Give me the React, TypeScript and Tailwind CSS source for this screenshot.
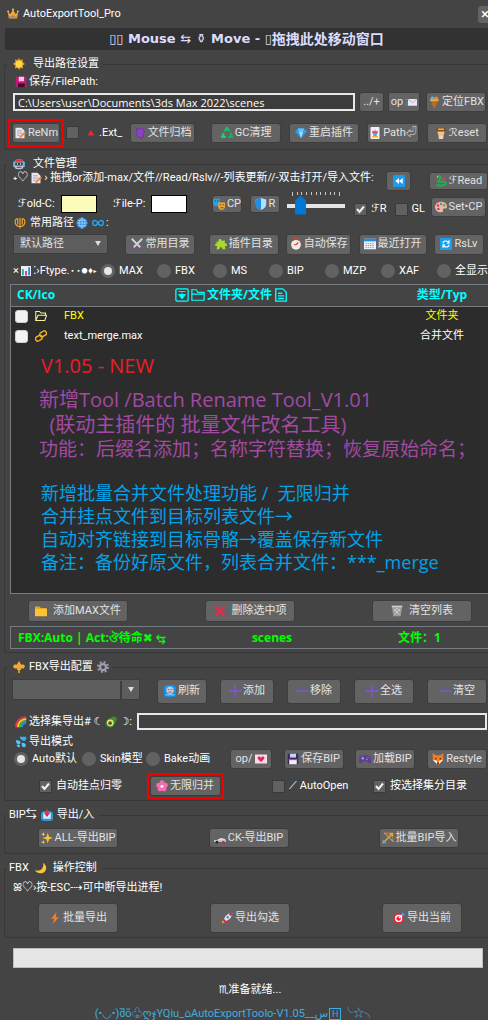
import { useState } from 'react'
import type { ReactNode } from 'react'
import clsx from 'clsx'

const drawings: Record<string, ReactNode> = {
  crown: (
    <>
      <path d="M1 5l3.500 3L8 2l3.500 6L15 5l-1.500 9h-11z" fill="#f2a33a" />
      <path d="M2.500 11h11v2.500h-11z" fill="#d9822b" />
      <circle cx="8" cy="11" r="1.500" fill="#3aa0e8" />
      <circle cx="8" cy="2" r="1.300" fill="#ffd36b" />
      <circle cx="1.500" cy="4.500" r="1.200" fill="#ffd36b" />
      <circle cx="14.500" cy="4.500" r="1.200" fill="#ffd36b" />
    </>
  ),
  sun: (
    <>
      <path d="M8 0l1.800 3L13 1.800l-.2 3.400L16 8l-3.200 2 .7 4-3.700-1L8 16l-1.800-3-3.700 1 .7-4L0 8l3.200-2.800L3 1.800 6.200 3z" fill="#e8a21e" />
      <circle cx="8" cy="8" r="4.500" fill="#ffd84a" />
    </>
  ),
  pinkDisk: (
    <>
      <path d="M1 1h14v14H3l-2-2z" fill="#d0127c" />
      <path d="M5 1h7v6H5z" fill="#f7c9e4" />
      <path d="M4 10h9v5H4z" fill="#3d0b2b" />
    </>
  ),
  memo: (
    <>
      <path d="M2 1h8l4 4v10H2z" fill="#e9e4ee" />
      <path d="M4 5h6M4 8h7M4 11h4" stroke="#8c93a8" />
      <path d="M14.500 5.500L8 12l-1.500 3 3-1L16 7.500z" fill="#f28a2a" />
    </>
  ),
  redTriangle: <path d="M8 2l6.500 11h-13z" fill="#f0262f" />,
  archive: (
    <path d="M3 2l4 1 2-2 3 2 2 4-2 2 1 4-4 2-3-2-3-3 1-3z" fill="#8e3fc4" stroke="#6d2aa0" />
  ),
  recycle: (
    <>
      <path d="M5 5.500L8 1l3 4.500" stroke="#16c46a" strokeWidth="3" fill="none" />
      <path d="M12.500 7.500L14.500 13H9.500" stroke="#10b45d" strokeWidth="3" fill="none" />
      <path d="M6.500 13h-5l2.200-5" stroke="#18d272" strokeWidth="3" fill="none" />
    </>
  ),
  gem: (
    <>
      <path d="M4 2h8l4 4-8 9L0 6z" fill="#2a9df0" />
      <path d="M5 6h6l-3 9z" fill="#9be2ff" />
      <path d="M4 2h8l-1 4H5z" fill="#5cc4ff" />
    </>
  ),
  joker: (
    <>
      <rect x="2" y="0" width="12" height="16" rx="1" fill="#f2eef5" />
      <path d="M4 5l3 1 1-3 1 3 3-1-1 4H5z" fill="#e2368c" />
      <circle cx="8" cy="10" r="2.500" fill="#35b7d8" />
      <path d="M4 13h8" stroke="#f3b52f" strokeWidth="2" />
    </>
  ),
  reset: (
    <>
      <path d="M2 1h12v6H2z" fill="#7a4b1f" />
      <path d="M4 2h8v2H4z" fill="#f0b63c" />
      <path d="M3 6h10l-2 7H5z" fill="#f4c08b" />
      <path d="M5 12h6v4H5z" fill="#ead7bb" />
    </>
  ),
  mail: (
    <>
      <path d="M0 5h4M1 9h3M0 12h4" stroke="#29a3e8" strokeWidth="1.500" />
      <rect x="4" y="4" width="12" height="9" fill="#ece6f5" />
      <path d="M4 4l6 5 6-5" stroke="#a79bbf" fill="none" />
    </>
  ),
  torch: (
    <>
      <path d="M4 7h9l-3.500 9h-2z" fill="#b96b28" />
      <path d="M3 4h11v3H3z" fill="#f3b23a" />
      <circle cx="6" cy="3" r="2.500" fill="#49c0e0" />
      <circle cx="11" cy="3" r="2.500" fill="#f08a2c" />
    </>
  ),
  robot: (
    <>
      <path d="M0 5h3v7H0zM13 5h3v7h-3z" fill="#4aa8e8" />
      <rect x="2" y="2" width="12" height="13" rx="4" fill="#b9c3d2" />
      <path d="M3 2h10v3H3z" fill="#e0313d" />
      <rect x="3" y="6" width="10" height="4" fill="#2a2e3a" />
      <circle cx="6" cy="8" r="1" fill="#fff" />
      <circle cx="10" cy="8" r="1" fill="#fff" />
      <path d="M5 12.500h6" stroke="#333" />
    </>
  ),
  rewind: (
    <>
      <rect width="16" height="16" rx="1" fill="#1a9cf0" />
      <path d="M8 4v8L3 8zM13 4v8L8 8z" fill="#fff" />
    </>
  ),
  dragon: (
    <>
      <path d="M3 2c4-2 6 2 3 4s-2 4 3 3 6 1 5 3-8 3-12 1" stroke="#1fae54" strokeWidth="2.800" fill="none" />
      <path d="M9 5l5-3-1 5z" fill="#e03a6c" />
      <circle cx="3.500" cy="2.500" r="1" fill="#ffe24a" />
    </>
  ),
  masks: (
    <>
      <path d="M0 1h9v6c0 3-2 4-4.500 4S0 10 0 7z" fill="#20a4ec" />
      <path d="M7 6h9v5c0 3-2 5-4.500 5S7 14 7 11z" fill="#f4a52c" />
      <path d="M2 4h2M5.500 4h2M9 9h2M12.500 9h2M10 13h4" stroke="#3d3319" />
    </>
  ),
  shield: (
    <>
      <path d="M8 0l7 2v6c0 4-3 6.500-7 8-4-1.500-7-4-7-8V2z" fill="#aee0ff" />
      <path d="M8 0v16c-4-1.500-7-4-7-8V2z" fill="#1e8fe0" />
    </>
  ),
  palette: (
    <>
      <path d="M8 1c5 0 8 3 8 6 0 4-3 3-4 3s-2 1-1 3c0 2-2 2-4 2-4 0-7-3-7-7s4-7 8-7z" fill="#f0b79a" />
      <circle cx="4" cy="6" r="1.600" fill="#e63946" />
      <circle cx="8" cy="4" r="1.600" fill="#2f9de4" />
      <circle cx="12" cy="5.500" r="1.600" fill="#36b36a" />
      <circle cx="4.500" cy="10.500" r="1.600" fill="#8a3fc4" />
    </>
  ),
  trident: (
    <path d="M8 1v14M5 2C0 3 0 12 8 13M11 2c5 1 5 10-3 11M5 2v8M11 2v8" stroke="#f0a52a" strokeWidth="1.600" fill="none" />
  ),
  globe: (
    <>
      <circle cx="8" cy="8" r="7.500" fill="#2f86d4" />
      <path d="M1 8h14M8 1v14M2.500 4.500h11M2.500 11.500h11M8 1c-5 4-5 10 0 14M8 1c5 4 5 10 0 14" stroke="#a5d8ff" fill="none" />
    </>
  ),
  infinity: (
    <path d="M8 8C5 3 1 4 1 8s4 5 7 0 7-4 7 0-4 5-7 0" stroke="#1fa2f0" strokeWidth="2" fill="none" />
  ),
  swords: (
    <>
      <path d="M1 1l12 12M15 1L3 13" stroke="#cfd3da" strokeWidth="2.400" />
      <path d="M1 11l4 4M15 11l-4 4" stroke="#7b4fa0" strokeWidth="2" />
    </>
  ),
  puzzle: (
    <path d="M1 5h4c-2-4 4-5 4-1l4-1v4c4-1 4 5 0 4l1 4h-4c0-4-5-3-4 0H2l1-4c-4 0-4-4 0-4z" fill="#a6dc2c" />
  ),
  clock: (
    <>
      <circle cx="8" cy="9" r="6.500" fill="#f0ece6" />
      <path d="M6 0h4v2H6zM12 2l2 2" fill="#e23b3b" stroke="#e23b3b" />
      <path d="M8 9l3-3M8 9H5" stroke="#d33" strokeWidth="1.500" />
    </>
  ),
  calendar: (
    <>
      <rect x="0" y="1" width="16" height="14" fill="#eef0f7" />
      <path d="M0 1h16v3.500H0z" fill="#1b8fe6" />
      <path d="M2 7.500h12M2 10h12M2 12.500h12" stroke="#7b86a8" strokeDasharray="2 1" />
    </>
  ),
  resolve: (
    <>
      <rect width="16" height="16" rx="1" fill="#149ff2" />
      <path d="M4 7c0-4 7-4 8 0M12 9c0 4-7 4-8 0M12 3v4H9M4 13V9h3" stroke="#fff" strokeWidth="1.500" fill="none" />
    </>
  ),
  chart: (
    <>
      <rect width="16" height="16" fill="#f0eef4" />
      <path d="M3 5v10" stroke="#19b6a0" strokeWidth="3" />
      <path d="M8 8v7" stroke="#e2368c" strokeWidth="3" />
      <path d="M13 2v13" stroke="#238fe0" strokeWidth="3" />
    </>
  ),
  boxArrow: (
    <>
      <rect x="1" y="1" width="14" height="14" rx="1.500" fill="none" stroke="#00ffff" strokeWidth="1.500" />
      <path d="M4 4h8M8 5v5M4 7.500l4 5 4-5z" stroke="#00ffff" fill="#00ffff" />
    </>
  ),
  folderLine: (
    <path d="M1 14V2h5l2 3h7v9zM1 7h14" fill="none" stroke="currentColor" strokeWidth="1.400" />
  ),
  fileLine: (
    <path d="M2 1h8l4 4v10H2zM4.500 6h5M4.500 9h7M4.500 12h7" fill="none" stroke="currentColor" strokeWidth="1.600" />
  ),
  folderOpen: (
    <path d="M1 14V2h5l2 2h6v3M1 14l3-7h11.500L13 14z" fill="none" stroke="#f5ef9a" strokeWidth="1.400" />
  ),
  link: (
    <>
      <rect x="6" y="2" width="9.500" height="6" rx="3" transform="rotate(-30 11 5)" fill="none" stroke="#f4b81c" strokeWidth="1.800" />
      <rect x="0.500" y="8" width="9.500" height="6" rx="3" transform="rotate(-30 5 11)" fill="none" stroke="#f4b81c" strokeWidth="1.800" />
    </>
  ),
  folder: (
    <>
      <path d="M0 2h6l2 2h7v10H0z" fill="#e9a21c" />
      <path d="M0 5h16v10H0z" fill="#fcc430" />
    </>
  ),
  cross: <path d="M2 2l12 12M14 2L2 14" stroke="#f0264a" strokeWidth="3.200" />,
  trash: (
    <>
      <path d="M1 1h14l-2 14H3z" fill="#9a9a9a" />
      <path d="M1 2h14" stroke="#d0d0d0" strokeWidth="2" />
      <path d="M4 5l7 8M8 4l4 5M12 5l-7 8M8 4L4 9" stroke="#e0e0e0" />
    </>
  ),
  fleur: (
    <path d="M8 0l3 5c5-2 6 3 3 5h-4l1 2H9v4H7v-4H5l1-2H2c-3-2-2-7 3-5z" fill="#f6a92d" />
  ),
  gear: (
    <>
      <circle cx="8" cy="8" r="6.500" fill="none" stroke="#a09bb0" strokeWidth="3" strokeDasharray="2.500 2.600" />
      <circle cx="8" cy="8" r="4" fill="none" stroke="#a09bb0" strokeWidth="3" />
    </>
  ),
  refresh: (
    <>
      <rect width="16" height="16" rx="4" fill="#1590e6" />
      <circle cx="8" cy="7" r="5" fill="#c4c9d4" />
      <path d="M5 6h2M9 6h2M6 9.500h4" stroke="#933" />
      <path d="M2 13h12" stroke="#60c4ff" strokeWidth="2" />
    </>
  ),
  plus: <path d="M8 0v16M0 8h16" stroke="#7b57c9" strokeWidth="2.400" />,
  minus: <path d="M0 8h16" stroke="#7b57c9" strokeWidth="2.400" />,
  rainbow: (
    <>
      <path d="M1.500 15C1 7 6 2 15 1.500" stroke="#e8343f" strokeWidth="2.500" fill="none" />
      <path d="M4 15C4 9 8 5 15 4" stroke="#f8c62d" strokeWidth="2.500" fill="none" />
      <path d="M6.500 15C6.500 11 10 7 15 6.500" stroke="#36b862" strokeWidth="2.500" fill="none" />
      <path d="M9 15c0-3 2-5 6-6" stroke="#2e83e0" strokeWidth="2.500" fill="none" />
    </>
  ),
  avocado: (
    <>
      <path d="M15 2c-3-3-6 0-9 1-5 2-7 8-3 11s9 1 10-4c1-3 4-5 2-8z" fill="#3f8f2d" />
      <circle cx="7" cy="9" r="4.500" fill="#d7e878" />
      <circle cx="6.800" cy="9.500" r="2.400" fill="#7a451d" />
    </>
  ),
  drops: (
    <>
      <path d="M6 1h9c1 4-2 7-5 5-1 0-3-2-4-5z" fill="#2fb1f4" />
      <path d="M1 6c5-1 7 1 6 4-2 3-6 0-6-4zM9 9c5 0 6 2 5 5-3 3-6-1-5-5zM2 12c3-1 5 0 5 2-1 2-4 1-5-2z" fill="#52c4fa" />
    </>
  ),
  love: (
    <>
      <rect x="0" y="2" width="16" height="12" fill="#f4dcea" />
      <path d="M8 12L3.500 7.500c0-4 4-3 4.500-1 .5-2 4.500-3 4.500 1z" fill="#ef2352" />
    </>
  ),
  disk: (
    <>
      <path d="M1 1h14v14H1z" fill="#3c2a66" />
      <path d="M4 1h8v5H4z" fill="#c8d4ee" />
      <path d="M3 8h10v7H3z" fill="#f3eef6" />
      <path d="M3 8h10v1.500H3z" fill="#e04242" />
    </>
  ),
  gamepad: (
    <>
      <path d="M4 3h8c4 0 5 10 3 11s-3-3-5-3H6c-2 0-3 4-5 3S0 3 4 3z" fill="#5b3f95" />
      <path d="M3 7h4M5 5v4" stroke="#c9b8ee" />
      <circle cx="12" cy="6" r="1" fill="#f04f6c" />
      <circle cx="10.500" cy="8.500" r="1" fill="#49c4f0" />
    </>
  ),
  fox: (
    <>
      <path d="M1 0l4 3h6l4-3v9l-7 7-7-7z" fill="#f47b20" />
      <path d="M1 9l5 1 2 6zM15 9l-5 1-2 6z" fill="#fff1dc" />
      <circle cx="5" cy="7.500" r="1" fill="#2b1a10" />
      <circle cx="11" cy="7.500" r="1" fill="#2b1a10" />
      <circle cx="8" cy="14" r="1.300" fill="#2b1a10" />
    </>
  ),
  flower: (
    <>
      <g fill="#f76bb4">
        <circle cx="8" cy="3.500" r="3.300" />
        <circle cx="3.500" cy="7" r="3.300" />
        <circle cx="12.500" cy="7" r="3.300" />
        <circle cx="5.300" cy="12" r="3.300" />
        <circle cx="10.700" cy="12" r="3.300" />
      </g>
      <circle cx="8" cy="8.200" r="2" fill="#fff2f8" />
    </>
  ),
  inbox: (
    <>
      <rect x="0" y="3" width="16" height="13" rx="4" fill="#2a97e0" />
      <path d="M3 5h10v8H3z" fill="#dfe8f4" />
      <path d="M8 0v7M5 5l3 4 3-4" stroke="#e4263b" strokeWidth="2" fill="none" />
    </>
  ),
  sparkles: (
    <>
      <path d="M9 1l1.800 5.200L16 8l-5.200 1.800L9 15l-1.800-5.200L2 8l5.200-1.800z" fill="#fcc02e" />
      <path d="M3 0l.8 2.200L6 3l-2.200.8L3 6l-.8-2.200L0 3l2.200-.8zM3 11l.7 1.800 1.800.7-1.800.7L3 16l-.7-1.800L.5 13.500l1.800-.7z" fill="#fdd25e" />
    </>
  ),
  racer: (
    <>
      <path d="M0 11h16v2H0z" fill="#d9dce4" />
      <path d="M5 10l4-2 5 1 2 2H4z" fill="#e8d9de" />
      <circle cx="4" cy="13.500" r="1.800" fill="#252035" />
      <circle cx="12.500" cy="13.500" r="1.800" fill="#c22f4c" />
    </>
  ),
  bow: (
    <>
      <path d="M3 1c8 0 12 4 12 12" stroke="#b5722c" strokeWidth="2" fill="none" />
      <path d="M3 1l12 12" stroke="#ddd" />
      <path d="M1 15L14 2M10 2h4v4" stroke="#e0a43c" strokeWidth="2" fill="none" />
      <path d="M1 11l4 4" stroke="#48b0d8" strokeWidth="2" />
    </>
  ),
  moon: <path d="M11 1c7 5 4 14-4 14-3 0-5-1-7-4 7 2 12-2 11-10z" fill="#f9c63a" />,
  bolt: <path d="M10 0L3 9h4l-2 7 8-9H9z" fill="#f77f22" />,
  rocket: (
    <>
      <path d="M2 9l4-2 4 5-1 4-3-3-3-1z" fill="#e3264a" />
      <path d="M15 1c-5 0-9 4-11 8l3 3c5-2 8-6 8-11z" fill="#dfe4f2" />
      <path d="M15 1c-2 0-4 .5-5 1.500L13.500 6C14.500 4.500 15 3 15 1z" fill="#e3264a" />
      <circle cx="9" cy="7" r="1.600" fill="#2c91dc" />
      <path d="M1 15l1-4 3 3z" fill="#f9a32c" />
    </>
  ),
  target: (
    <>
      <circle cx="7.500" cy="8.500" r="7" fill="#e8263a" />
      <circle cx="7.500" cy="8.500" r="4.800" fill="#fff" />
      <circle cx="7.500" cy="8.500" r="3" fill="#e8263a" />
      <path d="M8 8l5-5" stroke="#fff" strokeWidth="1.500" />
      <path d="M11 4l2-4 1 2 2 1-3 3z" fill="#34a8ee" />
    </>
  ),
}

function Icon({ name, size = 'size-3', className }: { name: string; size?: string; className?: string }) {
  return (
    <svg viewBox="0 0 16 16" aria-hidden="true" className={clsx('inline-block shrink-0', size, className)}>
      {drawings[name]}
    </svg>
  )
}

function Btn({ icon, children, className, label }: { icon?: string; children?: ReactNode; className?: string; label?: string }) {
  return (
    <button
      type="button"
      aria-label={label}
      className={clsx(
        'flex shrink-0 items-center justify-center whitespace-nowrap rounded-[3px] border border-[#3d3d3d] bg-[#636363] text-[#e2e2e2] hover:bg-[#707070]',
        className,
      )}
    >
      {icon && <Icon name={icon} className={children ? 'mr-0.5' : undefined} />}
      {children}
    </button>
  )
}

function Check({ children, checked, className }: { children?: ReactNode; checked?: boolean; className?: string }) {
  return (
    <label className={clsx('flex shrink-0 items-center gap-1 whitespace-nowrap', className)}>
      <span className="grid size-[13px] shrink-0">
        <input
          type="checkbox"
          defaultChecked={checked}
          aria-label={children ? undefined : 'Ext'}
          className="peer size-[13px] appearance-none border border-[#3a3a3a] bg-[#616161] [grid-area:1/1]"
        />
        <svg viewBox="0 0 13 13" className="pointer-events-none hidden size-[13px] [grid-area:1/1] peer-checked:block">
          <path d="M3 6l2.500 3L10 3.500" fill="none" stroke="#f0f0f0" strokeWidth="2" />
        </svg>
      </span>
      {children}
    </label>
  )
}

function Radio({ name, children, checked, onChange, className }: {
  name: string
  children: ReactNode
  checked: boolean
  onChange: () => void
  className?: string
}) {
  return (
    <label className={clsx('flex shrink-0 items-center gap-1 whitespace-nowrap', className)}>
      <input
        type="radio"
        name={name}
        checked={checked}
        onChange={onChange}
        className="size-3.5 shrink-0 appearance-none rounded-full bg-[#626262] checked:border-[3px] checked:border-[#626262] checked:bg-[#e6e6e6]"
      />
      {children}
    </label>
  )
}

function Select({ label, value, className, split }: { label: string; value: string; className?: string; split?: boolean }) {
  return (
    <span className={clsx('grid shrink-0 items-center', className)}>
      <select
        aria-label={label}
        className="size-full appearance-none border border-[#3d3d3d] bg-[#5d5d5d] pl-1.5 text-[#e2e2e2] [grid-area:1/1]"
      >
        <option>{value}</option>
      </select>
      <span
        className={clsx(
          'pointer-events-none flex h-[18px] w-5 items-center justify-center justify-self-end [grid-area:1/1]',
          split && 'border-l-2 border-[#3d3d3d]',
        )}
      >
        <svg viewBox="0 0 8 6" className="h-1.5 w-2">
          <path d="M1 0h6L4 5z" fill="#dcdcdc" />
        </svg>
      </span>
    </span>
  )
}

function Group({ title, children }: { title: ReactNode; children: ReactNode }) {
  return (
    <fieldset className="mt-1.5 ml-1 min-w-0 rounded-l-[3px] border border-r-0 border-[#383838]">
      <legend className="ml-0.5 flex h-4 items-center gap-1 pr-1 pl-0.5 leading-4">{title}</legend>
      {children}
    </fieldset>
  )
}

const fileTypes = ['MAX', 'FBX', 'MS', 'BIP', 'MZP', 'XAF', '全显示']

const exportModes = [
  { label: 'Auto默认', width: 'w-[68px]' },
  { label: 'Skin模型', width: 'w-16' },
  { label: 'Bake动画', width: 'w-[84px]' },
]

const files = [
  { name: 'FBX', type: '文件夹', icon: 'folderOpen', color: 'text-[#ffff00]' },
  { name: 'text_merge.max', type: '合并文件', icon: 'link', color: 'text-white' },
]

export default function App() {
  const [fileType, setFileType] = useState('MAX')
  const [mode, setMode] = useState('Auto默认')

  return (
    <div className="overflow-hidden bg-[#444444] font-['Roboto','Noto_Sans_CJK_SC','DejaVu_Sans',sans-serif] text-[11px] leading-4 text-white">
      <header className="flex h-7 items-center gap-1 pl-[7px]">
        <Icon name="crown" />
        <h1>AutoExportTool_Pro</h1>
        <button type="button" aria-label="关闭" className="-mr-1 ml-auto h-[17px] w-3.5 rounded-[3px] bg-[#636363] text-[15px] leading-4">×</button>
      </header>

      <div className="ml-[5px] flex h-[22px] items-center justify-center bg-[#323232] font-['DejaVu_Sans','Noto_Sans_CJK_SC',sans-serif] text-[13px] font-bold whitespace-pre text-[#dcdcff]">
        <span className="font-normal">▯▯</span> Mouse <span className="font-normal">⇆</span> ⚱ Move - <span className="font-normal">▯</span> <span className="text-[14px]">拖拽此处移动窗口</span>
      </div>

      {/* Export path */}
      <Group title={<><Icon name="sun" className="mx-1" />导出路径设置</>}>
        <label htmlFor="path" className="ml-2.5 flex h-5 items-center gap-0.5">
          <Icon name="pinkDisk" /> 保存/FilePath:
        </label>
        <div className="flex h-5 items-center pr-0.5 pl-2">
          <input
            id="path"
            defaultValue="C:\Users\user\Documents\3ds Max 2022\scenes"
            className="h-[18px] min-w-0 flex-1 border-2 border-[#e8e8e8] bg-[#3c3c3c] pl-[3px] font-['Open_Sans',sans-serif] text-[11px] text-white"
          />
          <Btn className="ml-1 h-5 w-[25px]">../+</Btn>
          <Btn className="ml-1 h-5 w-8">op<Icon name="mail" className="ml-0.5" /></Btn>
          <Btn className="ml-1.5 h-5 w-[60px]" icon="torch">定位FBX</Btn>
        </div>
        <div className="mt-2 mb-1 flex h-[25px] items-center justify-between pr-px pl-[3px]">
          <div className="flex items-center">
            <span className="border-2 border-[#f50000] p-0.5">
              <Btn className="h-5 w-12" icon="memo">ReNm</Btn>
            </span>
            <Check className="ml-0.5" />
            <Icon name="redTriangle" size="size-2" className="mr-1 ml-2" />
            <span>.Ext_</span>
          </div>
          <Btn className="h-5 w-[65px]" icon="archive">文件归档</Btn>
          <Btn className="ml-2 h-5 w-[70px]" icon="recycle">GC清理</Btn>
          <Btn className="h-5 w-[70px]" icon="gem">重启插件</Btn>
          <Btn className="h-5 w-[52px]" icon="joker">Path⏎</Btn>
          <Btn className="h-5 w-[60px]" icon="reset">ℛeset</Btn>
        </div>
      </Group>

      {/* File management */}
      <Group title={<><Icon name="robot" className="mx-1" />文件管理</>}>
        <div className="flex h-[18px] items-center">
          <p className="flex items-center gap-0.5 self-start pl-2 leading-3 whitespace-nowrap">
            ˖♡<Icon name="memo" /> › 拖拽or添加-max/文件//Read/Rslv//-列表更新//-双击打开/导入文件:
          </p>
          <Btn className="mr-[18px] ml-auto h-5 w-[25px]" label="后退" icon="rewind" />
          <Btn className="h-[18px] w-[59px]" icon="dragon">ℱRead</Btn>
        </div>
        <div className="flex h-[27px] items-center pr-0.5 pl-[13px]">
          <label htmlFor="foldColor" className="w-[43px]">ℱold-C:</label>
          <button id="foldColor" type="button" className="h-[18px] w-9 border border-black bg-[#fbfbb9]" />
          <label htmlFor="fileColor" className="ml-4 w-[38px] whitespace-nowrap">ℱile-P:</label>
          <button id="fileColor" type="button" className="h-[18px] w-9 border border-black bg-white" />
          <Btn className="ml-[25px] h-[18px] w-[30px]" icon="masks">CP</Btn>
          <Btn className="ml-2 h-[18px] w-[30px]" icon="shield">R</Btn>
          <div className="ml-[7px] min-w-0 flex-1">
            <div className="mx-[5px] flex h-1 justify-between">
              {Array.from({ length: 11 }, (_, i) => (
                <span key={i} className={clsx('w-px bg-[#c8c8c8]', i % 10 === 0 ? 'h-1' : 'h-[3px]')} />
              ))}
            </div>
            <input
              type="range"
              aria-label="图标大小"
              defaultValue={17}
              className="block h-5 w-full appearance-none bg-transparent [&::-webkit-slider-runnable-track]:h-1 [&::-webkit-slider-runnable-track]:bg-[#e4e4e4] [&::-webkit-slider-thumb]:-mt-2 [&::-webkit-slider-thumb]:h-[19px] [&::-webkit-slider-thumb]:w-[11px] [&::-webkit-slider-thumb]:appearance-none [&::-webkit-slider-thumb]:bg-[#0078d7] [&::-webkit-slider-thumb]:[clip-path:polygon(50%_0,100%_28%,100%_100%,0_100%,0_28%)]"
            />
          </div>
          <Check className="ml-[9px] self-end" checked>ℱR</Check>
          <Check className="ml-2 self-end">GL</Check>
          <Btn className="ml-1.5 h-5 w-[55px] self-end" icon="palette">Set•CP</Btn>
        </div>
        <p className="flex h-3 items-center gap-0.5 pl-[9px]">
          <Icon name="trident" className="mr-0.5" /> 常用路径 <Icon name="globe" /> <Icon name="infinity" className="ml-0.5" /> :
        </p>
        <div className="mt-[5px] flex h-5 items-center justify-between pr-1 pl-2">
          <Select label="常用路径" value="默认路径" className="mr-2.5 h-5 w-[95px]" />
          <Btn className="mr-1.5 h-[21px] w-[70px]" icon="swords">常用目录</Btn>
          <Btn className="h-[21px] w-[70px]" icon="puzzle">插件目录</Btn>
          <Btn className="h-[21px] w-[65px]" icon="clock">自动保存</Btn>
          <Btn className="h-[21px] w-[68px]" icon="calendar">最近打开</Btn>
          <Btn className="h-[21px] w-[50px]" icon="resolve">RsLv</Btn>
        </div>
        <div className="mt-[7px] flex h-5 items-center pl-2" role="radiogroup" aria-label="Ftype">
          <span className="flex w-[88px] shrink-0 items-center whitespace-nowrap">
            ×<Icon name="chart" size="size-2.5" className="mx-0.5" />⁚›Ftype.<span className="text-[6px]">▪▪●♦▸</span>
          </span>
          <div className="flex flex-1">
            {fileTypes.map((type, i) => (
              <Radio
                key={type}
                name="ftype"
                checked={fileType === type}
                onChange={() => setFileType(type)}
                className={i < fileTypes.length - 1 ? 'w-14' : undefined}
              >
                {type}
              </Radio>
            ))}
          </div>
        </div>

        <div className="mt-[3px] ml-[5px] overflow-hidden border border-r-0 border-[#777b84] bg-[#2c2c2c]">
          <table className="w-full table-fixed">
            <thead className="font-['Open_Sans','Noto_Sans_CJK_SC',sans-serif] text-[12px] font-bold text-[#00ffff]">
              <tr className="h-[21px] border-b border-[#777b84] bg-[#444444]">
                <th className="w-[52px] pl-1.5 text-left whitespace-nowrap">CK/Ico</th>
                <th>
                  <span className="flex items-center justify-center gap-0.5">
                    <Icon name="boxArrow" size="size-3.5" />
                    <Icon name="folderLine" size="size-3.5" />文件夹/文件<Icon name="fileLine" size="size-3.5" />
                  </span>
                </th>
                <th className="w-[88px] pr-1">类型/Typ</th>
              </tr>
            </thead>
            <tbody>
              {files.map(file => (
                <tr key={file.name} className={clsx('h-5', file.color)}>
                  <td>
                    <span className="flex items-center gap-[7px] pl-1">
                      <input type="checkbox" aria-label={file.name} className="size-[13px] appearance-none rounded-[3px] border border-[#cfcfcf] bg-[#f3f3f3] checked:bg-[#0078d7]" />
                      <Icon name={file.icon} />
                    </span>
                  </td>
                  <td className="pl-px">{file.name}</td>
                  <td className="pr-1 text-center">{file.type}</td>
                </tr>
              ))}
            </tbody>
          </table>
          <div className="pt-2 pb-[19px] pl-[30px] font-['Open_Sans','Noto_Sans_CJK_SC',sans-serif] whitespace-pre">
            <p className="text-[20px] leading-6 text-[#ee1c25]">V1.05 - NEW</p>
            <div className="-ml-0.5 mt-[9px] text-[20px] leading-[25px] text-[#a349a4]">
              <p>新增Tool /Batch Rename Tool_V1.01</p>
              <p>{'  (联动主插件的 批量文件改名工具)'}</p>
              <p className="text-[19px]">功能：后缀名添加；名称字符替换；恢复原始命名；</p>
            </div>
            <div className="mt-5 text-[18px] leading-[23px] text-[#00a2e8]">
              <p>{'新增批量合并文件处理功能 /  无限归并'}</p>
              <p>合并挂点文件到目标列表文件→</p>
              <p>自动对齐链接到目标骨骼→覆盖保存新文件</p>
              <p>备注：备份好原文件，列表合并文件：***_merge</p>
            </div>
          </div>
        </div>

        <div className="mt-1.5 flex h-[22px] items-center justify-between pr-4 pl-[23px]">
          <Btn className="h-[22px] w-[100px] gap-1" icon="folder">添加MAX文件</Btn>
          <Btn className="h-[22px] w-[90px] gap-1" icon="cross">删除选中项</Btn>
          <Btn className="h-[22px] w-[100px] gap-1" icon="trash">清空列表</Btn>
        </div>
        <div className="mt-1 mb-[3px] ml-[5px] grid h-[23px] grid-cols-[172px_1fr_134px] items-center border border-r-0 border-[#777b84] pl-[7px] font-['Open_Sans','Noto_Sans_CJK_SC','DejaVu_Sans',sans-serif] text-[12px] font-bold text-[#00ff00]">
          <span className="whitespace-nowrap">FBX:Auto | Act:ঔ待命✖ ⥃</span>
          <span className="text-center">scenes</span>
          <span className="pl-11 whitespace-nowrap">文件：1</span>
        </div>
      </Group>

      {/* FBX export settings */}
      <Group title={<><Icon name="fleur" className="ml-1" />FBX导出配置<Icon name="gear" /></>}>
        <div className="mt-1 flex h-6 items-center justify-between pr-px pl-[7px]">
          <Select label="导出配置" value="" className="mr-1 h-[21px] w-32 self-start" split />
          <Btn className="h-[25px] w-[50px]" icon="refresh">刷新</Btn>
          <Btn className="h-[25px] w-[54px]" icon="plus">添加</Btn>
          <Btn className="h-[25px] w-[54px]" icon="minus">移除</Btn>
          <Btn className="h-[25px] w-[60px]" icon="plus">全选</Btn>
          <Btn className="h-[25px] w-[60px]" icon="minus">清空</Btn>
        </div>
        <div className="mt-2.5 flex h-[17px] items-center pr-px pl-2.5">
          <label htmlFor="selSet" className="flex w-[122px] items-center gap-0.5 whitespace-nowrap">
            <Icon name="rainbow" />选择集导出# ☾ <Icon name="avocado" /> ☽:
          </label>
          <input id="selSet" className="h-[17px] min-w-0 flex-1 border-2 border-[#e8e8e8] bg-[#414141] px-1" />
        </div>
        <p className="mt-1 flex h-[15px] items-center gap-0.5 pl-2.5">
          <Icon name="drops" />导出模式
        </p>
        <div className="flex h-5 items-center pr-px pl-[9px]" role="radiogroup" aria-label="导出模式">
          {exportModes.map(m => (
            <Radio key={m.label} name="mode" checked={mode === m.label} onChange={() => setMode(m.label)} className={m.width}>
              {m.label}
            </Radio>
          ))}
          <div className="flex flex-1 items-center justify-between">
            <Btn className="h-5 w-[42px]">op/<Icon name="love" className="ml-0.5" /></Btn>
            <Btn className="h-5 w-[60px]" icon="disk">保存BIP</Btn>
            <Btn className="h-5 w-[60px]" icon="gamepad">加载BIP</Btn>
            <Btn className="h-5 w-[60px]" icon="fox">Restyle</Btn>
          </div>
        </div>
        <div className="mt-[5px] mb-0.5 flex h-6 items-center justify-between pr-[21px] pl-[34px]">
          <Check checked>自动挂点归零</Check>
          <span className="border-2 border-[#f50000] p-px">
            <Btn className="h-5 w-[71px]" icon="flower">无限归并</Btn>
          </span>
          <Check className="ml-6">⟋ AutoOpen</Check>
          <Check checked>按选择集分目录</Check>
        </div>
      </Group>

      <Group title={<>BIP⇆<Icon name="inbox" />导出/入</>}>
        <div className="mt-[5px] mb-[5px] flex h-5 items-center justify-between pr-[29px] pl-[33px]">
          <Btn className="h-5 w-20" icon="sparkles">ALL-导出BIP</Btn>
          <Btn className="h-5 w-20" icon="racer">CK-导出BIP</Btn>
          <Btn className="h-5 w-20" icon="bow">批量BIP导入</Btn>
        </div>
      </Group>

      <Group title={<>FBX <Icon name="moon" className="mx-0.5" />操作控制</>}>
        <p className="mt-1 h-[15px] pl-2 whitespace-nowrap">ꕤ♡›按-ESC-⇢可中断导出进程!</p>
        <div className="mt-2 mb-[5px] flex h-[29px] items-center justify-between pr-[26px] pl-[33px]">
          <Btn className="h-[30px] w-20" icon="bolt">批量导出</Btn>
          <Btn className="h-[30px] w-20" icon="rocket">导出勾选</Btn>
          <Btn className="h-[30px] w-20" icon="target">导出当前</Btn>
        </div>
      </Group>

      <div role="progressbar" aria-label="导出进度" aria-valuenow={0} className="mt-2.5 mr-[5px] ml-[13px] h-5 border border-[#bcbcbc] bg-[#e6e6e6]" />
      <p className="mt-3.5 h-4 pl-3 text-center">♏︎准备就绪...</p>
      <footer className="mt-[7px] flex h-[17px] items-center justify-center pr-[18px] text-[11px] whitespace-nowrap text-[#3daee0]">
        (•◡•)შǒ♧ღჯYQiu_⌂AutoExportToolo-V1.05__س
        <span className="mx-px flex size-3 items-center justify-center border border-[#3daee0] text-[9px]">H</span>╰☆╮
      </footer>
    </div>
  )
}
